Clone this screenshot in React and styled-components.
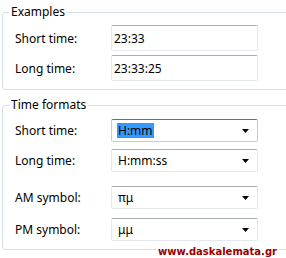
import React from 'react';
import styled, { createGlobalStyle } from 'styled-components';

const Global = createGlobalStyle`
  html, body {
    margin: 0;
    padding: 0;
    background: #fff;
  }
  body {
    font-family: "Noto Sans", "Open Sans", sans-serif;
    font-size: 12px;
    color: #000;
  }
`

const Page = styled.div`
  position: relative;
  width: 286px;
  height: 258px;
  overflow: hidden;
  padding-left: 2px;
  box-sizing: border-box;
`

const Group = styled.section`
  position: relative;
  width: 310px;
  margin-top: ${p => p.$top}px;
  padding: ${p => p.$pad}px 0 8px 12px;
  border: 1px solid #d5dfe5;
  border-radius: 3px;
  box-sizing: border-box;
  display: flex;
  flex-direction: column;
`

const Title = styled.span`
  position: absolute;
  top: -9px;
  left: 6px;
  padding: 0 2px;
  background: #fff;
  line-height: 16px;
`

const Row = styled.div`
  display: flex;
  align-items: center;
  margin-top: ${p => p.$gap || 0}px;
`

const Label = styled.div`
  width: 96px;
  flex: none;
`

const TextBox = styled.div`
  width: 147px;
  height: 26px;
  box-sizing: border-box;
  border: 1px solid #e3e9ef;
  border-top-color: #abadb3;
  border-radius: 2px;
  padding-left: 2px;
  display: flex;
  align-items: center;
`

const Combo = styled.div`
  width: 147px;
  height: 23px;
  box-sizing: border-box;
  border: 1px solid ${p => (p.$focus ? '#b5cfe7' : '#e3e9ef')};
  border-top-color: ${p => (p.$focus ? '#3d7bad' : '#abadb3')};
  border-radius: 2px;
  padding: 0 8px 0 5px;
  display: flex;
  align-items: center;
  justify-content: space-between;
`

const Value = styled.span`
  line-height: 15px;
  padding: 0 1px;
  background: ${p => (p.$selected ? '#3399ff' : 'transparent')};
`

const Arrow = () => (
  <svg width="7" height="4" viewBox="0 0 7 4">
    <path d="M0 0h7L3.5 4z" fill="#000" />
  </svg>
)

const Watermark = styled.div`
  position: absolute;
  right: 7px;
  bottom: 0px;
  font-family: "DejaVu Sans", Verdana, sans-serif;
  font-weight: bold;
  font-size: 10px;
  line-height: 12px;
  color: #9a0000;
  background: #fff;
  padding: 0 2px;
`

const formats = [
  { label: 'Short time:', value: 'H:mm', focus: true, gap: 0 },
  { label: 'Long time:', value: 'H:mm:ss', gap: 7 },
  { label: 'AM symbol:', value: 'πμ', gap: 14 },
  { label: 'PM symbol:', value: 'μμ', gap: 9 },
]

export default function App() {
  return (
    <Page>
      <Global />
      <Group $top={12} $pad={12}>
        <Title>Examples</Title>
        <Row>
          <Label>Short time:</Label>
          <TextBox>23:33</TextBox>
        </Row>
        <Row $gap={4}>
          <Label>Long time:</Label>
          <TextBox>23:33:25</TextBox>
        </Row>
      </Group>
      <Group $top={15} $pad={13}>
        <Title>Time formats</Title>
        {formats.map(f => (
          <Row key={f.label} $gap={f.gap}>
            <Label>{f.label}</Label>
            <Combo $focus={f.focus}>
              <Value $selected={f.focus}>{f.value}</Value>
              <Arrow />
            </Combo>
          </Row>
        ))}
      </Group>
      <Watermark>www.daskalemata.gr</Watermark>
    </Page>
  );
}
